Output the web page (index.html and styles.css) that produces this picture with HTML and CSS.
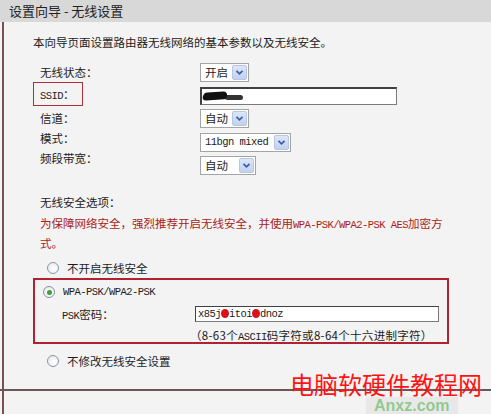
FILE: index.html
```html
<!DOCTYPE html>
<html lang="zh-CN">
<head>
  <meta charset="UTF-8" />
  <title>设置向导 - 无线设置</title>
  <link rel="stylesheet" href="styles.css">
</head>
<body>
  <div class="header">设置向导 - 无线设置</div>

  <div class="page">
    <div class="content">
      <p class="intro">本向导页面设置路由器无线网络的基本参数以及无线安全。</p>

      <div class="basic">
        <div class="labels">
          <div class="label">无线状态：</div>
          <div class="label boxed"><span class="mono">SSID</span>：</div>
          <div class="label spaced">信道：</div>
          <div class="label">模式：</div>
          <div class="label">频段带宽：</div>
        </div>
        <div class="controls">
          <div class="select w49"><span>开启</span><i class="arrow"><svg viewBox="0 0 15 15"><polyline points="4,5.5 7.5,9 11,5.5" /></svg></i></div>
          <div class="textbox ssid"><span class="smudge"></span><span class="smudge small"></span></div>
          <div class="select w49"><span>自动</span><i class="arrow"><svg viewBox="0 0 15 15"><polyline points="4,5.5 7.5,9 11,5.5" /></svg></i></div>
          <div class="select w91"><span class="mono">11bgn mixed</span><i class="arrow"><svg viewBox="0 0 15 15"><polyline points="4,5.5 7.5,9 11,5.5" /></svg></i></div>
          <div class="select w56"><span>自动</span><i class="arrow"><svg viewBox="0 0 15 15"><polyline points="4,5.5 7.5,9 11,5.5" /></svg></i></div>
        </div>
      </div>

      <div class="security">
        <div class="sec-title">无线安全选项：</div>
        <p class="warn">为保障网络安全，强烈推荐开启无线安全，并使用<span class="mono">WPA-PSK/WPA2-PSK AES</span>加密方<br>式。</p>

        <div class="radio-row"><span class="radio"></span>不开启无线安全</div>

        <div class="wpa-box">
          <div class="radio-row"><span class="radio checked"></span><span class="mono">WPA-PSK/WPA2-PSK</span></div>
          <div class="psk-row">
            <span class="psk-label"><span class="mono">PSK</span>密码：</span>
            <div class="textbox psk"><span class="mono">x85j<b class="dot"></b>itoi<b class="dot"></b>dnoz</span></div>
          </div>
          <div class="hint">（8-63个<span class="mono">ASCII</span>码字符或8-64个十六进制字符）</div>
        </div>

        <div class="radio-row last"><span class="radio"></span>不修改无线安全设置</div>
      </div>
    </div>
    <div class="rule"></div>
  </div>

  <div class="stamp">
    <span class="stamp-green">Anxz.com</span>
    <span class="stamp-red">电脑软硬件教程网</span>
  </div>
</body>
</html>
```

FILE: styles.css
```css
body {
  margin: 0;
  background: #f4f3f3;
  font-family: "Noto Sans CJK SC", "Liberation Sans", sans-serif;
  font-size: 11.5px;
  color: #1c1c1c;
  width: 491px;
  height: 414px;
  overflow: hidden;
  position: relative;
}
p {
  margin: 0;
}
.mono {
  font-family: "Liberation Mono", "DejaVu Sans Mono", monospace;
  font-size: 10.5px;
  letter-spacing: -0.55px;
}

.header {
  height: 22px;
  line-height: 22px;
  background: #d8d8d8;
  padding-left: 9px;
  font-size: 13px;
  color: #222;
}

.page {
  margin-left: 2px;
  border-left: 2px solid #7b5050;
  height: 392px;
}
.content {
  height: 367px;
  padding-top: 12px;
  box-sizing: border-box;
}
.rule {
  margin-left: -4px;
  height: 2px;
  background: #6a5656;
}

.intro {
  margin-left: 29px;
  line-height: 16px;
}

/* basic settings */
.basic {
  display: flex;
  margin-top: 12px;
  margin-left: 29px;
}
.labels {
  width: 167px;
}
.label {
  line-height: 20px;
  padding-left: 7px;
}
.label.boxed {
  width: 42px;
  padding: 2px 0 0 6px;
  line-height: 18px;
  border: 1px solid #b0303a;
}
.label.spaced {
  margin-top: 2px;
}
.controls {
  display: flex;
  flex-direction: column;
  align-items: flex-start;
  gap: 4.5px;
  padding-top: 1px;
}
.select {
  height: 19px;
  box-sizing: border-box;
  border: 1px solid #a4a4a4;
  background: #fff;
  display: flex;
  align-items: center;
  justify-content: space-between;
  padding: 0 1px 0 4px;
  line-height: 17px;
}
.w49 { width: 49px; }
.w56 { width: 56px; }
.w91 { width: 91px; }
.arrow {
  width: 15px;
  height: 15px;
  box-sizing: border-box;
  border: 1px solid #b7c6e6;
  background: linear-gradient(#dde6f8, #c1d1ef);
  border-radius: 2px;
  display: flex;
}
.arrow svg {
  width: 13px;
  height: 13px;
  fill: none;
  stroke: #3d5fa8;
  stroke-width: 2;
}
.textbox {
  box-sizing: border-box;
  background: #fff;
  border: 1px solid #7a7a7a;
  border-top-color: #404040;
  border-left-color: #404040;
  display: flex;
  align-items: center;
}
.textbox.ssid {
  width: 197px;
  height: 18px;
  border-width: 2px 1px 1px 2px;
}
.smudge {
  width: 24px;
  height: 8px;
  margin-left: 1px;
  background: #111;
  border-radius: 4px 6px 2px 5px;
  transform: skewX(-20deg) rotate(-4deg);
}
.smudge.small {
  width: 18px;
  height: 5px;
  margin-left: -2px;
  margin-top: 2px;
  background: #333;
  border-radius: 3px;
  transform: none;
}

/* security */
.security {
  margin-left: 36px;
  margin-top: 18px;
}
.sec-title {
  line-height: 18px;
}
.warn {
  margin-top: 3px;
  line-height: 18px;
  color: #a81c22;
  white-space: nowrap;
}
.radio-row {
  display: flex;
  align-items: center;
  line-height: 18px;
  margin-top: 7px;
  padding-left: 7px;
}
.radio-row.last {
  margin-top: 8px;
}
.radio {
  width: 12px;
  height: 12px;
  box-sizing: border-box;
  border: 1px solid #8594a8;
  border-radius: 50%;
  background: radial-gradient(circle at 60% 60%, #ffffff, #e6e6e6);
  margin-right: 8px;
  position: relative;
}
.radio.checked::after {
  content: "";
  position: absolute;
  left: 2.5px;
  top: 2.5px;
  width: 5px;
  height: 5px;
  border-radius: 50%;
  background: #3c9f3c;
}
.wpa-box {
  margin-left: -7px;
  margin-top: 1px;
  width: 416px;
  height: 66px;
  box-sizing: border-box;
  border: 2px solid #b02232;
}
.wpa-box .radio-row {
  margin-top: 3px;
  padding-left: 8px;
}
.psk-row {
  display: flex;
  align-items: center;
  height: 18px;
  margin-top: 4px;
  padding-left: 27px;
}
.psk-label {
  width: 133px;
}
.textbox.psk {
  width: 244px;
  height: 16px;
  padding-left: 2px;
}
.dot {
  display: inline-block;
  width: 8px;
  height: 9px;
  border-radius: 50%;
  background: #d8121c;
  vertical-align: -1px;
}
.hint {
  margin-top: 5px;
  margin-left: 155px;
  line-height: 14px;
  white-space: nowrap;
  letter-spacing: 0.3px;
}

/* watermark over the corner */
.stamp {
  position: absolute;
  left: 290px;
  top: 358px;
  width: 200px;
  height: 56px;
}
.stamp-green {
  position: absolute;
  left: 76px;
  top: 39px;
  padding: 0 8px;
  font-family: "Liberation Sans", sans-serif;
  font-weight: bold;
  font-size: 16px;
  line-height: 17px;
  color: rgba(70, 175, 70, 0.55);
  background: rgba(225, 225, 225, 0.6);
}
.stamp-red {
  position: absolute;
  left: 0;
  top: 14px;
  font-size: 24px;
  line-height: 24px;
  color: #ff1414;
  white-space: nowrap;
}
```
